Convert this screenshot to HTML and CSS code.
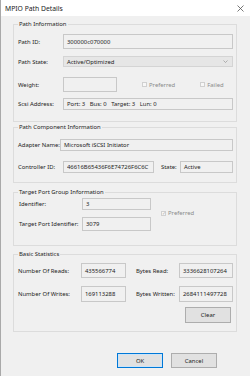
FILE: index.html
```html
<!DOCTYPE html>
<html lang="en">
<head>
    <meta charset="UTF-8">
    <meta name="viewport" content="width=device-width, initial-scale=1.0">
    <title>MPIO Path Details</title>
    <link rel="stylesheet" href="styles.css">
</head>
<body>
    <div class="window">
        <div class="titlebar">
            <span class="title">MPIO Path Details</span>
            <svg class="close" width="7" height="7" viewBox="0 0 7 7">
                <path d="M0.5 0.5 L6.5 6.5 M6.5 0.5 L0.5 6.5" stroke="#555" stroke-width="0.8" fill="none"/>
            </svg>
        </div>

        <div class="content">
            <fieldset class="group g-path">
                <legend>Path Information</legend>
                <div class="row r-id">
                    <label class="lbl w45">Path ID:</label>
                    <div class="field grow">300000c070000</div>
                </div>
                <div class="row r-state">
                    <label class="lbl w45">Path State:</label>
                    <div class="select grow">
                        <span>Active/Optimized</span>
                        <svg width="5" height="3" viewBox="0 0 5 3"><path d="M0.5 0.5 L2.5 2.5 L4.5 0.5" stroke="#888" stroke-width="0.6" fill="none"/></svg>
                    </div>
                </div>
                <div class="row r-weight">
                    <label class="lbl w45">Weight:</label>
                    <div class="field weight"></div>
                    <div class="check c-pref"><span class="box"></span>Preferred</div>
                    <div class="check c-fail"><span class="box"></span>Failed</div>
                </div>
                <div class="row r-scsi">
                    <label class="lbl w45">Scsi Address:</label>
                    <div class="field grow">Port: 3&nbsp;&nbsp; Bus: 0&nbsp;&nbsp; Target: 3&nbsp;&nbsp; Lun: 0</div>
                </div>
            </fieldset>

            <fieldset class="group g-comp">
                <legend>Path Component Information</legend>
                <div class="row r-adapter">
                    <label class="lbl w42">Adapter Name:</label>
                    <div class="field grow">Microsoft iSCSI Initiator</div>
                </div>
                <div class="row r-ctrl">
                    <label class="lbl w45">Controller ID:</label>
                    <div class="field ctrl"><span class="clip">46616B65436F6E74726F6C6C</span></div>
                    <label class="lbl state-lbl">State:</label>
                    <div class="field grow">Active</div>
                </div>
            </fieldset>

            <fieldset class="group g-tpg">
                <legend>Target Port Group Information</legend>
                <div class="row r-ident">
                    <label class="lbl w64">Identifier:</label>
                    <div class="field tp">3</div>
                    <div class="check c-tp"><span class="box checked">&#10003;</span>Preferred</div>
                </div>
                <div class="row r-tpi">
                    <label class="lbl w64">Target Port Identifier:</label>
                    <div class="field tp">3079</div>
                </div>
            </fieldset>

            <fieldset class="group g-stats">
                <legend>Basic Statistics</legend>
                <div class="row r-reads">
                    <label class="lbl w63">Number Of Reads:</label>
                    <div class="field num">435566774</div>
                    <label class="lbl bytes-lbl">Bytes Read:</label>
                    <div class="field bytes">3336628107264</div>
                </div>
                <div class="row r-writes">
                    <label class="lbl w63">Number Of Writes:</label>
                    <div class="field num">169113288</div>
                    <label class="lbl bytes-lbl">Bytes Written:</label>
                    <div class="field bytes">2684111497728</div>
                </div>
                <div class="row r-clear">
                    <button class="btn clear">Clear</button>
                </div>
            </fieldset>

            <div class="actions">
                <button class="btn ok">OK</button>
                <button class="btn">Cancel</button>
            </div>
        </div>
    </div>
</body>
</html>
```

FILE: styles.css
```css
* {
    margin: 0;
    padding: 0;
    box-sizing: border-box;
    font-family: "Noto Sans", sans-serif;
}

body {
    width: 250px;
    height: 376px;
    background: #f0f0f0;
    overflow: hidden;
}

.window {
    height: 376px;
    border-left: 1px solid #a9a9a9;
    background: #f0f0f0;
    color: #222;
    font-size: 5.9px;
}

.titlebar {
    height: 16px;
    background: #fff;
    display: flex;
    align-items: center;
    justify-content: space-between;
    padding: 0 6px 0 4px;
}

.title {
    font-size: 6.8px;
    color: #222;
}

.content {
    display: flex;
    flex-direction: column;
}

.group {
    border: 1px solid #dcdcdc;
    margin: 0 13px 0 12px;
    padding: 0 3px 0 4px;
}

.group legend {
    line-height: 9px;
    padding: 0 1px;
    color: #222;
}

.g-path {
    margin-top: 4px;
    padding-top: 5px;
    padding-bottom: 11px;
}

.g-comp {
    margin-top: 1px;
    padding-top: 7px;
    padding-bottom: 9px;
}

.g-tpg {
    margin-top: 5px;
    padding-top: 0;
    padding-bottom: 14px;
}

.g-stats {
    margin-top: 4px;
    padding-top: 4px;
    padding-bottom: 8px;
}

.row {
    display: flex;
    align-items: center;
}

.lbl {
    flex-shrink: 0;
    white-space: nowrap;
}

.w42 { width: 42px; }
.w45 { width: 45px; }
.w63 { width: 63px; }
.w64 { width: 64px; padding-left: 1px; }

.field {
    height: 100%;
    border: 1px solid #c8c8c8;
    background: #f0f0f0;
    padding: 0 3px;
    display: flex;
    align-items: center;
    white-space: nowrap;
    overflow: hidden;
}

.clip {
    display: block;
    overflow: hidden;
    width: 100%;
}

.grow {
    flex: 1;
}

.select {
    height: 100%;
    border: 1px solid #d4d4d4;
    background: #e6e6e6;
    padding: 0 4px 0 3px;
    display: flex;
    align-items: center;
    justify-content: space-between;
}

/* path information rows */
.r-id { height: 15px; }
.r-state { height: 11px; margin-top: 7px; }
.r-weight { height: 15px; margin-top: 10px; }
.r-scsi { height: 12px; margin-top: 6px; }

.weight {
    width: 54px;
}

.check {
    display: flex;
    align-items: center;
    color: #8a8a8a;
    white-space: nowrap;
}

.check .box {
    width: 5px;
    height: 5px;
    border: 1px solid #d0d0d0;
    background: #f7f7f7;
    margin-right: 2px;
    font-size: 5px;
    line-height: 3px;
    color: #b0b0b0;
    text-align: center;
}

.c-pref { margin-left: 25px; }
.c-fail { margin-left: 25px; }

/* path component rows */
.r-adapter { height: 12px; }
.r-ctrl { height: 12px; margin-top: 10px; }

.ctrl {
    width: 91px;
}

.state-lbl {
    margin-left: 7px;
    width: 19px;
}

/* target port group rows */
.r-ident { height: 12px; margin-top: 1px; align-items: flex-start; }
.r-ident .lbl { align-self: center; }
.r-tpi { height: 14px; margin-top: 7px; }

.tp {
    width: 69px;
}

.c-tp {
    margin-left: 10px;
    margin-top: 11px;
}

/* statistics rows */
.r-reads { height: 15px; }
.r-writes { height: 16px; margin-top: 8px; }
.r-clear { height: 16px; margin-top: 5px; justify-content: flex-end; padding-right: 2px; }

.num {
    width: 45px;
}

.bytes-lbl {
    margin-left: 10px;
    width: 43px;
}

.bytes {
    flex: 1;
    padding: 0 1px 0 3px;
}

.btn {
    width: 46px;
    height: 16px;
    border: 1px solid #adadad;
    background: #e1e1e1;
    font-size: 5.9px;
    color: #222;
}

.actions {
    display: flex;
    justify-content: flex-end;
    gap: 8px;
    margin-top: 21px;
    padding-right: 33px;
}

.actions .btn {
    height: 15px;
}

.ok {
    border: 1px solid #0078d7;
    box-shadow: inset 0 0 0 1px #cde4f7;
}
```
